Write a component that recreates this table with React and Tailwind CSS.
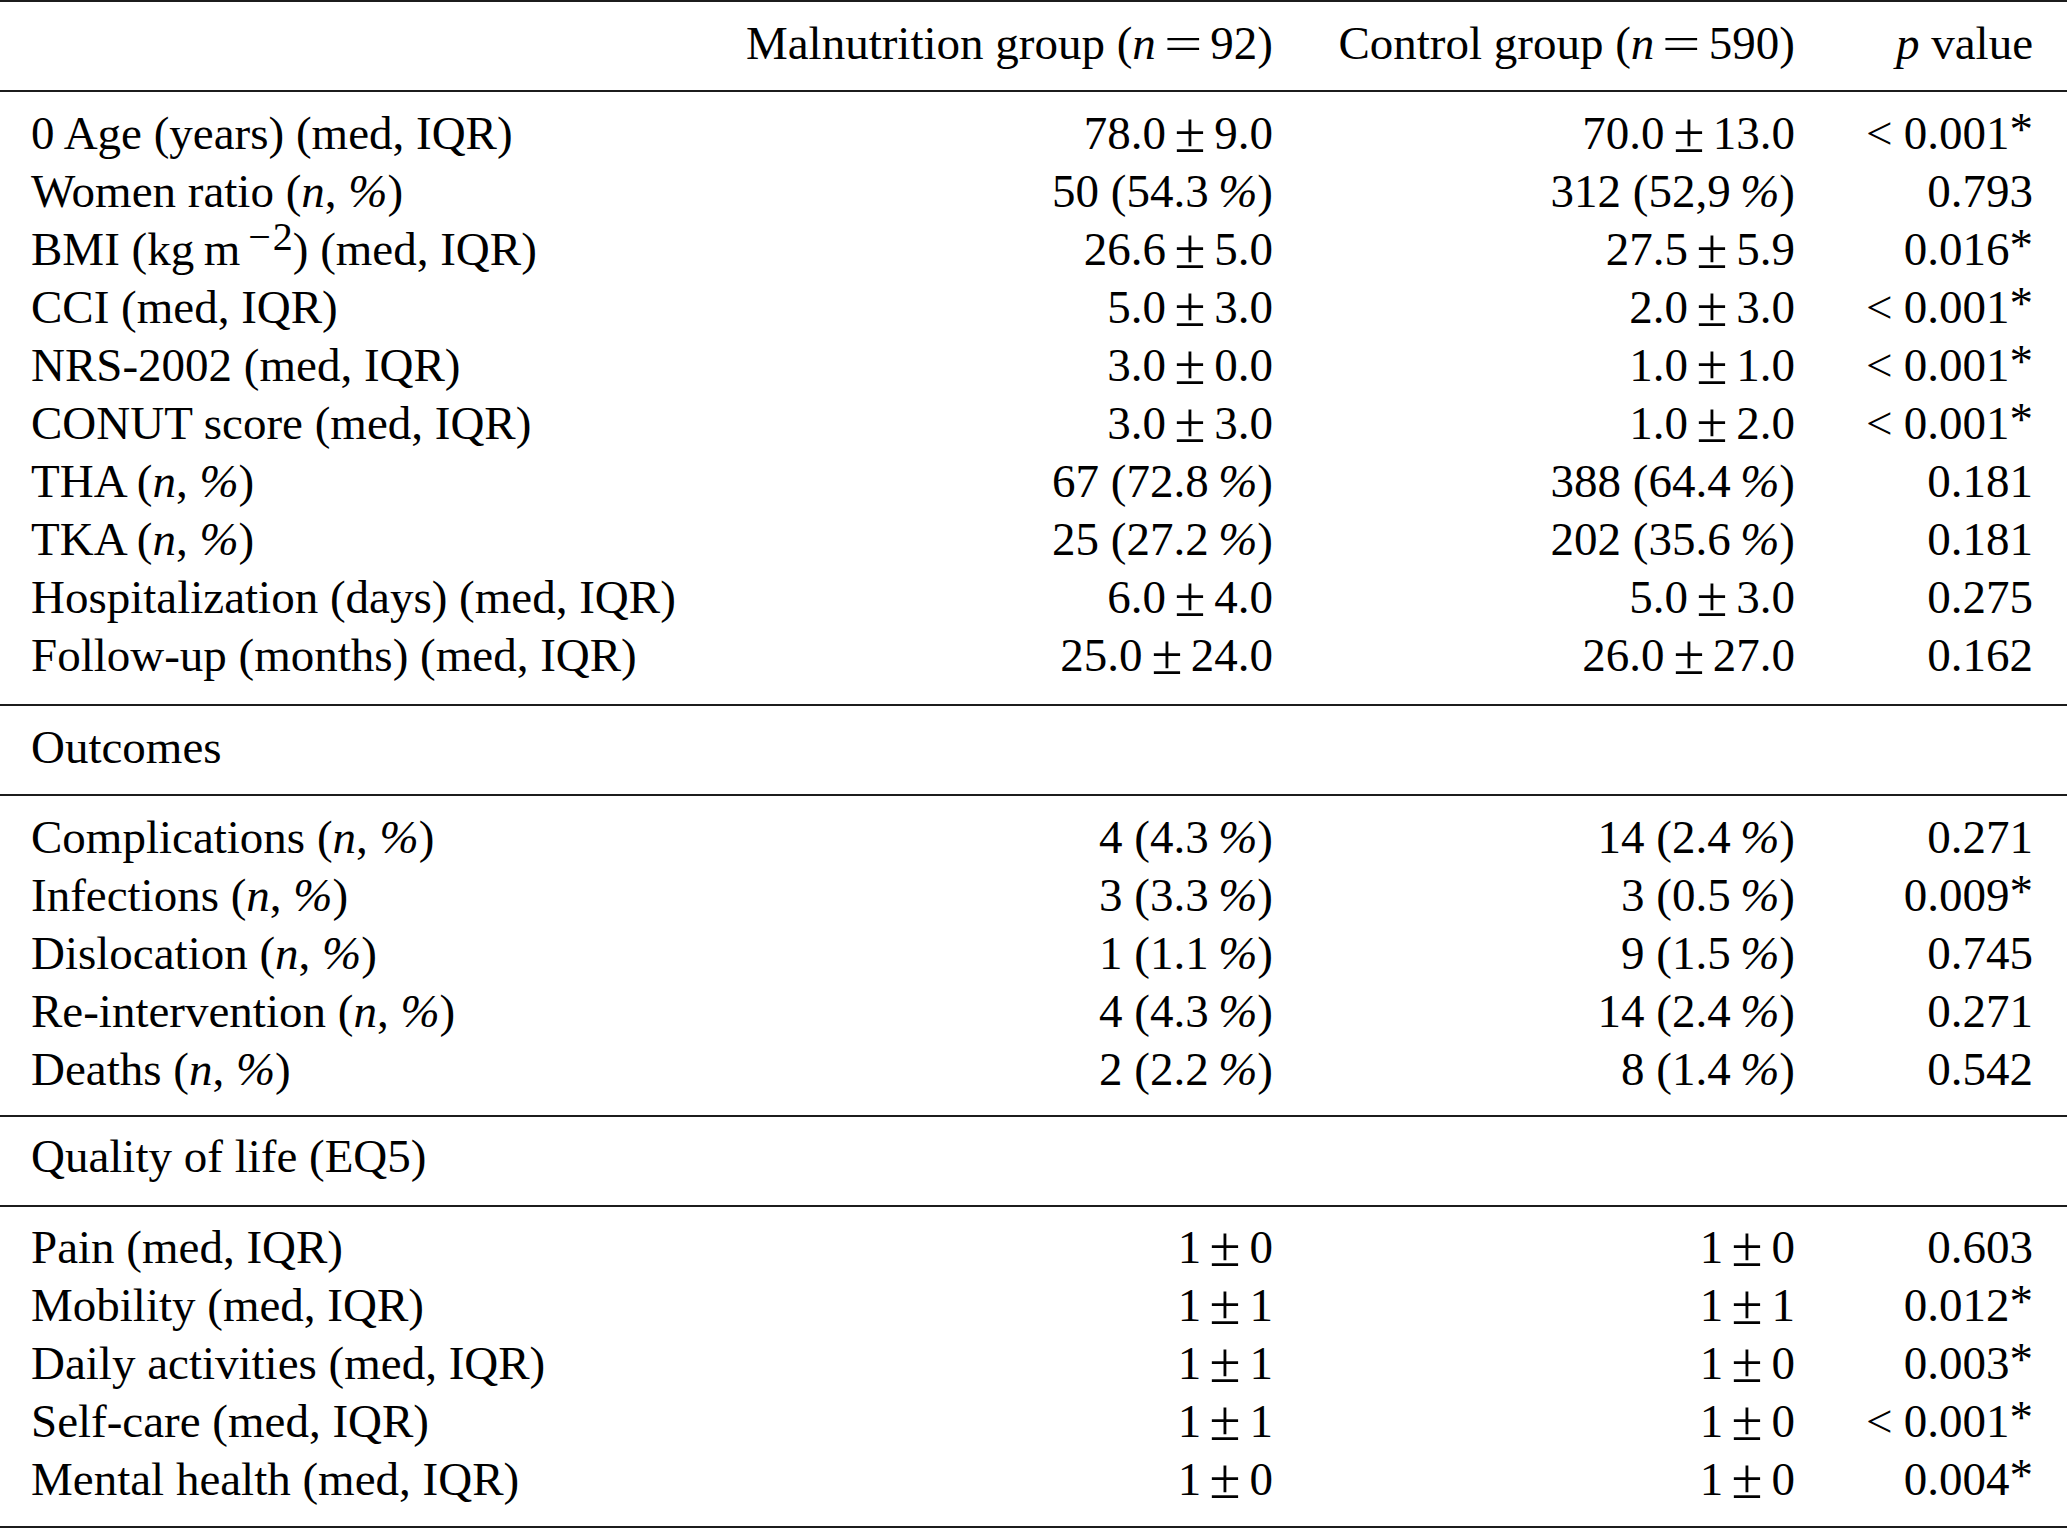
import React from "react";

const cols = "grid grid-cols-[1fr_560px_522px_238px] pl-[31px] pr-[34px] whitespace-nowrap";

// turns a plain value string into typeset pieces (±, %, <, *)
const fmt = (s) => {
  const out = [];
  let buf = "";
  const flush = () => {
    if (buf) out.push(buf);
    buf = "";
  };
  for (let i = 0; i < s.length; i++) {
    const c = s[i];
    if (c === "±") {
      buf = buf.trimEnd();
      flush();
      out.push(
        <span key={i} className="inline-block mx-[0.24em] scale-[1.2]">
          ±
        </span>
      );
      while (s[i + 1] === " ") i++;
    } else if (c === "%") {
      buf = buf.trimEnd();
      flush();
      out.push(<span key={"s" + i}>{"\u2009"}</span>);
      out.push(
        <i key={i} className="italic">
          %
        </i>
      );
    } else if (c === "<") {
      flush();
      out.push(
        <span key={i} className="mr-[0.24em]">
          {"<"}
        </span>
      );
      while (s[i + 1] === " ") i++;
    } else if (c === "*") {
      flush();
      out.push(
        <span key={i} className="relative -top-[4px]">
          *
        </span>
      );
    } else {
      buf += c;
    }
  }
  flush();
  return out;
};

const NP = () => (
  <>
    (<i className="italic">n</i>, <i className="italic">%</i>)
  </>
);

const Row = ({ label, a, b, p }) => (
  <div className={cols}>
    <div>{label}</div>
    <div className="text-right">{fmt(a)}</div>
    <div className="text-right">{fmt(b)}</div>
    <div className="text-right">{fmt(p)}</div>
  </div>
);

const Eq = () => (
  <span className="inline-block mx-[14px] scale-x-[1.45]">=</span>
);

const baseline = [
  { label: "0 Age (years) (med, IQR)", a: "78.0 ± 9.0", b: "70.0 ± 13.0", p: "< 0.001*" },
  { label: <>Women ratio <NP /></>, a: "50 (54.3 %)", b: "312 (52,9 %)", p: "0.793" },
  {
    label: (
      <>
        BMI (kg{"\u2009"}m
        <span className="relative -top-[15px] text-[40px] leading-none ml-[8px]">
          <span className="mr-[2px]">−</span>2
        </span>
        ) (med, IQR)
      </>
    ),
    a: "26.6 ± 5.0",
    b: "27.5 ± 5.9",
    p: "0.016*",
  },
  { label: "CCI (med, IQR)", a: "5.0 ± 3.0", b: "2.0 ± 3.0", p: "< 0.001*" },
  { label: "NRS-2002 (med, IQR)", a: "3.0 ± 0.0", b: "1.0 ± 1.0", p: "< 0.001*" },
  { label: "CONUT score (med, IQR)", a: "3.0 ± 3.0", b: "1.0 ± 2.0", p: "< 0.001*" },
  { label: <>THA <NP /></>, a: "67 (72.8 %)", b: "388 (64.4 %)", p: "0.181" },
  { label: <>TKA <NP /></>, a: "25 (27.2 %)", b: "202 (35.6 %)", p: "0.181" },
  { label: "Hospitalization (days) (med, IQR)", a: "6.0 ± 4.0", b: "5.0 ± 3.0", p: "0.275" },
  { label: "Follow-up (months) (med, IQR)", a: "25.0 ± 24.0", b: "26.0 ± 27.0", p: "0.162" },
];

const outcomes = [
  { label: <>Complications <NP /></>, a: "4 (4.3 %)", b: "14 (2.4 %)", p: "0.271" },
  { label: <>Infections <NP /></>, a: "3 (3.3 %)", b: "3 (0.5 %)", p: "0.009*" },
  { label: <>Dislocation <NP /></>, a: "1 (1.1 %)", b: "9 (1.5 %)", p: "0.745" },
  { label: <>Re-intervention <NP /></>, a: "4 (4.3 %)", b: "14 (2.4 %)", p: "0.271" },
  { label: <>Deaths <NP /></>, a: "2 (2.2 %)", b: "8 (1.4 %)", p: "0.542" },
];

const quality = [
  { label: "Pain (med, IQR)", a: "1 ± 0", b: "1 ± 0", p: "0.603" },
  { label: "Mobility (med, IQR)", a: "1 ± 1", b: "1 ± 1", p: "0.012*" },
  { label: "Daily activities (med, IQR)", a: "1 ± 1", b: "1 ± 0", p: "0.003*" },
  { label: "Self-care (med, IQR)", a: "1 ± 1", b: "1 ± 0", p: "< 0.001*" },
  { label: "Mental health (med, IQR)", a: "1 ± 0", b: "1 ± 0", p: "0.004*" },
];

export default function App() {
  return (
    <div className="min-h-screen w-[2067px] bg-white text-black font-['Liberation_Serif','Times_New_Roman',serif] text-[47px] leading-[58px]">
      <div className="border-t-2 border-b-2 border-[#1c1c1c] pt-[12px] pb-[18px]">
        <div className={cols}>
          <div></div>
          <div className="text-right">
            Malnutrition group (<i className="italic">n</i>
            <Eq />
            92)
          </div>
          <div className="text-right">
            Control group (<i className="italic">n</i>
            <Eq />
            590)
          </div>
          <div className="text-right">
            <i className="italic">p</i> value
          </div>
        </div>
      </div>

      <div className="border-b-2 border-[#1c1c1c] pt-[12px] pb-[20px]">
        {baseline.map((r, i) => (
          <Row key={i} {...r} />
        ))}
      </div>

      <div className="border-b-2 border-[#1c1c1c] pt-[12px] pb-[18px] pl-[31px]">Outcomes</div>

      <div className="border-b-2 border-[#1c1c1c] pt-[12px] pb-[17px]">
        {outcomes.map((r, i) => (
          <Row key={i} {...r} />
        ))}
      </div>

      <div className="border-b-2 border-[#1c1c1c] pt-[10px] pb-[20px] pl-[31px]">Quality of life (EQ5)</div>

      <div className="border-b-2 border-[#1c1c1c] pt-[11px] pb-[18px]">
        {quality.map((r, i) => (
          <Row key={i} {...r} />
        ))}
      </div>
    </div>
  );
}
